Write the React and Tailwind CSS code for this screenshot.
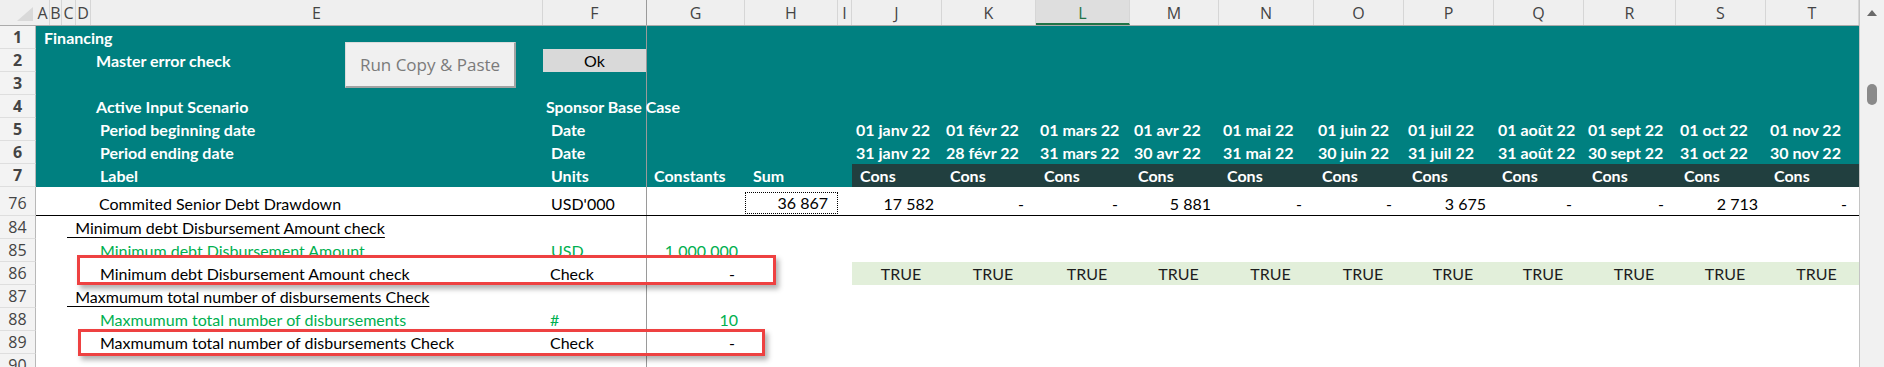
import React from 'react'

const LETTERS = ['J', 'K', 'L', 'M', 'N', 'O', 'P', 'Q', 'R', 'S', 'T']
const W = ['w-[90px]', 'w-[94px]', 'w-[94px]', 'w-[89px]', 'w-[95px]', 'w-[90px]', 'w-[90px]', 'w-[90px]', 'w-[92px]', 'w-[90px]', 'w-[93px]']
const STARTS = ['01 janv 22', '01 févr 22', '01 mars 22', '01 avr 22', '01 mai 22', '01 juin 22', '01 juil 22', '01 août 22', '01 sept 22', '01 oct 22', '01 nov 22']
const ENDS = ['31 janv 22', '28 févr 22', '31 mars 22', '30 avr 22', '31 mai 22', '30 juin 22', '31 juil 22', '31 août 22', '30 sept 22', '31 oct 22', '30 nov 22']
const DRAWDOWN = ['17 582', '-', '-', '5 881', '-', '-', '3 675', '-', '-', '2 713', '-']

const RowNum = ({ n, h = 'h-[23px]', pt = '' }) => (
  <div className={`${h} ${pt} w-[36px] shrink-0 bg-[#f3f3f3] border-r border-b border-r-[#b8b8b8] border-b-[#dedede] text-center leading-[23px] text-[16px] text-[#444] [font-family:'Open_Sans',sans-serif]`}>
    {n}
  </div>
)

const Cell = ({ w, className = '', children }) => (
  <div className={`${w} shrink-0 whitespace-nowrap leading-[23px] ${className}`}>{children}</div>
)

// frame for the first columns: label (A-E), F with the frozen line, G, H, I
const Fixed = ({ label, labelCls = '', f, fCls = '', g, gCls = '', h, hCls = '' }) => (
  <>
    <Cell w="w-[507px]" className={labelCls}>{label}</Cell>
    <Cell w="w-[104px]" className={`border-r border-[#9a9a9a] ${fCls}`}>{f}</Cell>
    <Cell w="w-[98px]" className={gCls}>{g}</Cell>
    <Cell w="w-[93px]" className={hCls}>{h}</Cell>
    <Cell w="w-[14px]" />
  </>
)

const Row = ({ n, bg = '', children, h = 'h-[23px]' }) => (
  <div className={`flex ${h}`}>
    <RowNum n={n} />
    <div className={`flex flex-1 ${bg}`}>{children}</div>
  </div>
)

export default function App() {
  return (
    <div className="flex w-[1884px] h-[367px] overflow-hidden bg-white text-[16px] text-black [font-family:Lato,sans-serif]">
      <div className="relative w-[1859px] shrink-0">
        {/* column letters */}
        <div className="flex h-[26px] bg-[#efefef] border-b border-[#ababab] text-[16px] text-[#444] [font-family:'Open_Sans',sans-serif]">
          <div className="w-[36px] shrink-0 flex items-end justify-end pr-[3px] pb-[4px]">
            <svg width="16" height="14" viewBox="0 0 16 14"><path d="M16 0 L16 14 L0 14 Z" fill="#d9d9d9" /></svg>
          </div>
          <div className="w-[14px] shrink-0 text-center pt-[2px] leading-[23px] border-r border-[#d6d6d6]">A</div>
          <div className="w-[12px] shrink-0 text-center pt-[2px] leading-[23px] border-r border-[#d6d6d6]">B</div>
          <div className="w-[14px] shrink-0 text-center pt-[2px] leading-[23px] border-r border-[#d6d6d6]">C</div>
          <div className="w-[15px] shrink-0 text-center pt-[2px] leading-[23px] border-r border-[#d6d6d6]">D</div>
          <div className="w-[452px] shrink-0 text-center pt-[2px] leading-[23px] border-r border-[#d6d6d6]">E</div>
          <div className="w-[104px] shrink-0 text-center pt-[2px] leading-[23px] border-r border-[#9a9a9a]">F</div>
          <div className="w-[98px] shrink-0 text-center pt-[2px] leading-[23px] border-r border-[#d6d6d6]">G</div>
          <div className="w-[93px] shrink-0 text-center pt-[2px] leading-[23px] border-r border-[#d6d6d6]">H</div>
          <div className="w-[14px] shrink-0 text-center pt-[2px] leading-[23px] border-r border-[#d6d6d6]">I</div>
          {LETTERS.map((l, i) => (
            <div
              key={l}
              className={`${W[i]} shrink-0 text-center pt-[2px] leading-[23px] border-r border-[#d6d6d6] ${l === 'L' ? 'bg-[#dedede] text-[#217346] border-b-2 border-b-[#217346]' : ''}`}
            >
              {l}
            </div>
          ))}
        </div>

        {/* teal title block */}
        <div className="font-bold text-white">
          <Row n={1} bg="bg-[#008080]">
            <Fixed label="Financing" labelCls="pl-[8px]" />
            {W.map((w, i) => <Cell key={i} w={w} />)}
          </Row>
          <Row n={2} bg="bg-[#008080]">
            <Fixed label="Master error check" labelCls="pl-[60px]" f="Ok" fCls="bg-[#d9d9d9] text-center font-normal text-black" />
            {W.map((w, i) => <Cell key={i} w={w} />)}
          </Row>
          <Row n={3} bg="bg-[#008080]">
            <Fixed />
            {W.map((w, i) => <Cell key={i} w={w} />)}
          </Row>
          <Row n={4} bg="bg-[#008080]">
            <Fixed label="Active Input Scenario" labelCls="pl-[60px]" f="Sponsor Base Case" fCls="pl-[3px]" />
            {W.map((w, i) => <Cell key={i} w={w} />)}
          </Row>
          <Row n={5} bg="bg-[#008080]">
            <Fixed label="Period beginning date" labelCls="pl-[64px]" f="Date" fCls="pl-[8px]" />
            {W.map((w, i) => <Cell key={i} w={w} className="pl-[4px]">{STARTS[i]}</Cell>)}
          </Row>
          <Row n={6} bg="bg-[#008080]">
            <Fixed label="Period ending date" labelCls="pl-[64px]" f="Date" fCls="pl-[8px]" />
            {W.map((w, i) => <Cell key={i} w={w} className="pl-[4px]">{ENDS[i]}</Cell>)}
          </Row>
          <Row n={7} bg="bg-[#008080]">
            <Fixed label="Label" labelCls="pl-[64px]" f="Units" fCls="pl-[8px]" g="Constants" gCls="pl-[7px]" h="Sum" hCls="pl-[8px]" />
            {W.map((w, i) => <Cell key={i} w={w} className="pl-[8px] bg-[#213f3f]">Cons</Cell>)}
          </Row>
        </div>

        {/* row 76 */}
        <div className="flex h-[29px]">
          <RowNum n={76} h="h-[29px]" pt="pt-[5px]" />
          <div className="flex flex-1 border-b border-black pt-[5px]">
            <Fixed label="Commited Senior Debt Drawdown" labelCls="pl-[63px]" f="USD'000" fCls="pl-[8px] -mt-[5px] pt-[5px]" />
            {DRAWDOWN.map((v, i) => (
              <Cell key={i} w={W[i]} className={`text-right ${v === '-' ? 'pr-[12px]' : 'pr-[8px]'}`}>{v}</Cell>
            ))}
          </div>
          <div className="absolute left-[745px] top-[192px] w-[93px] h-[22px] border border-dotted border-black text-right pr-[9px] leading-[20px]">36 867</div>
        </div>

        <Row n={84}>
          <Fixed label={<span className="whitespace-pre underline underline-offset-[3px] decoration-1">{'  Minimum debt Disbursement Amount check'}</span>} labelCls="pl-[31px]" />
        </Row>
        <Row n={85}>
          <Fixed label="Minimum debt Disbursement Amount" labelCls="pl-[64px] text-[#00b050]" f="USD" fCls="pl-[8px] text-[#00b050]" g="1 000 000" gCls="text-right pr-[7px] text-[#00b050]" />
        </Row>
        <Row n={86}>
          <Fixed label="Minimum debt Disbursement Amount check" labelCls="pl-[64px]" f="Check" fCls="pl-[7px]" g="-" gCls="text-right pr-[10px]" />
          {W.map((w, i) => <Cell key={i} w={w} className="bg-[#e2efda] text-center pl-[8px] text-[#1e1e1e]">TRUE</Cell>)}
        </Row>
        <Row n={87}>
          <Fixed label={<span className="whitespace-pre underline underline-offset-[3px] decoration-1">{'  Maxmumum total number of disbursements Check'}</span>} labelCls="pl-[31px]" />
        </Row>
        <Row n={88}>
          <Fixed label="Maxmumum total number of disbursements" labelCls="pl-[64px] text-[#00b050]" f="#" fCls="pl-[7px] text-[#00b050]" g="10" gCls="text-right pr-[7px] text-[#00b050]" />
        </Row>
        <Row n={89}>
          <Fixed label="Maxmumum total number of disbursements Check" labelCls="pl-[64px]" f="Check" fCls="pl-[7px]" g="-" gCls="text-right pr-[10px]" />
        </Row>
        <Row n={90}>
          <Fixed />
        </Row>

        {/* floating shapes on the sheet */}
        <div className="absolute left-[345px] top-[42px] w-[171px] h-[46px] bg-[#f0f0f0] border border-[#dcdcdc] border-r-2 border-b-2 border-r-[#a3a3a3] border-b-[#a3a3a3] flex items-center justify-center text-[17px] text-[#7b7b7b] [font-family:'Open_Sans',sans-serif]">
          Run Copy &amp; Paste
        </div>
        <div className="absolute left-[77px] top-[255px] w-[699px] h-[30px] border-[3px] border-[#ee4141] shadow-[3px_4px_5px_rgba(0,0,0,0.3)]" />
        <div className="absolute left-[78px] top-[329px] w-[687px] h-[27px] border-[3px] border-[#ee4141] shadow-[3px_4px_5px_rgba(0,0,0,0.3)]" />
      </div>

      {/* vertical scrollbar */}
      <div className="w-[25px] shrink-0 bg-[#f1f1f1] border-l border-[#c4c4c4] flex flex-col items-center">
        <svg className="mt-[10px]" width="10" height="6" viewBox="0 0 10 6"><path d="M0 6 L5 0 L10 6 Z" fill="#6a6a6a" /></svg>
        <div className="mt-[68px] w-[10px] h-[21px] rounded-full bg-[#8a8a8a]" />
      </div>
    </div>
  )
}
